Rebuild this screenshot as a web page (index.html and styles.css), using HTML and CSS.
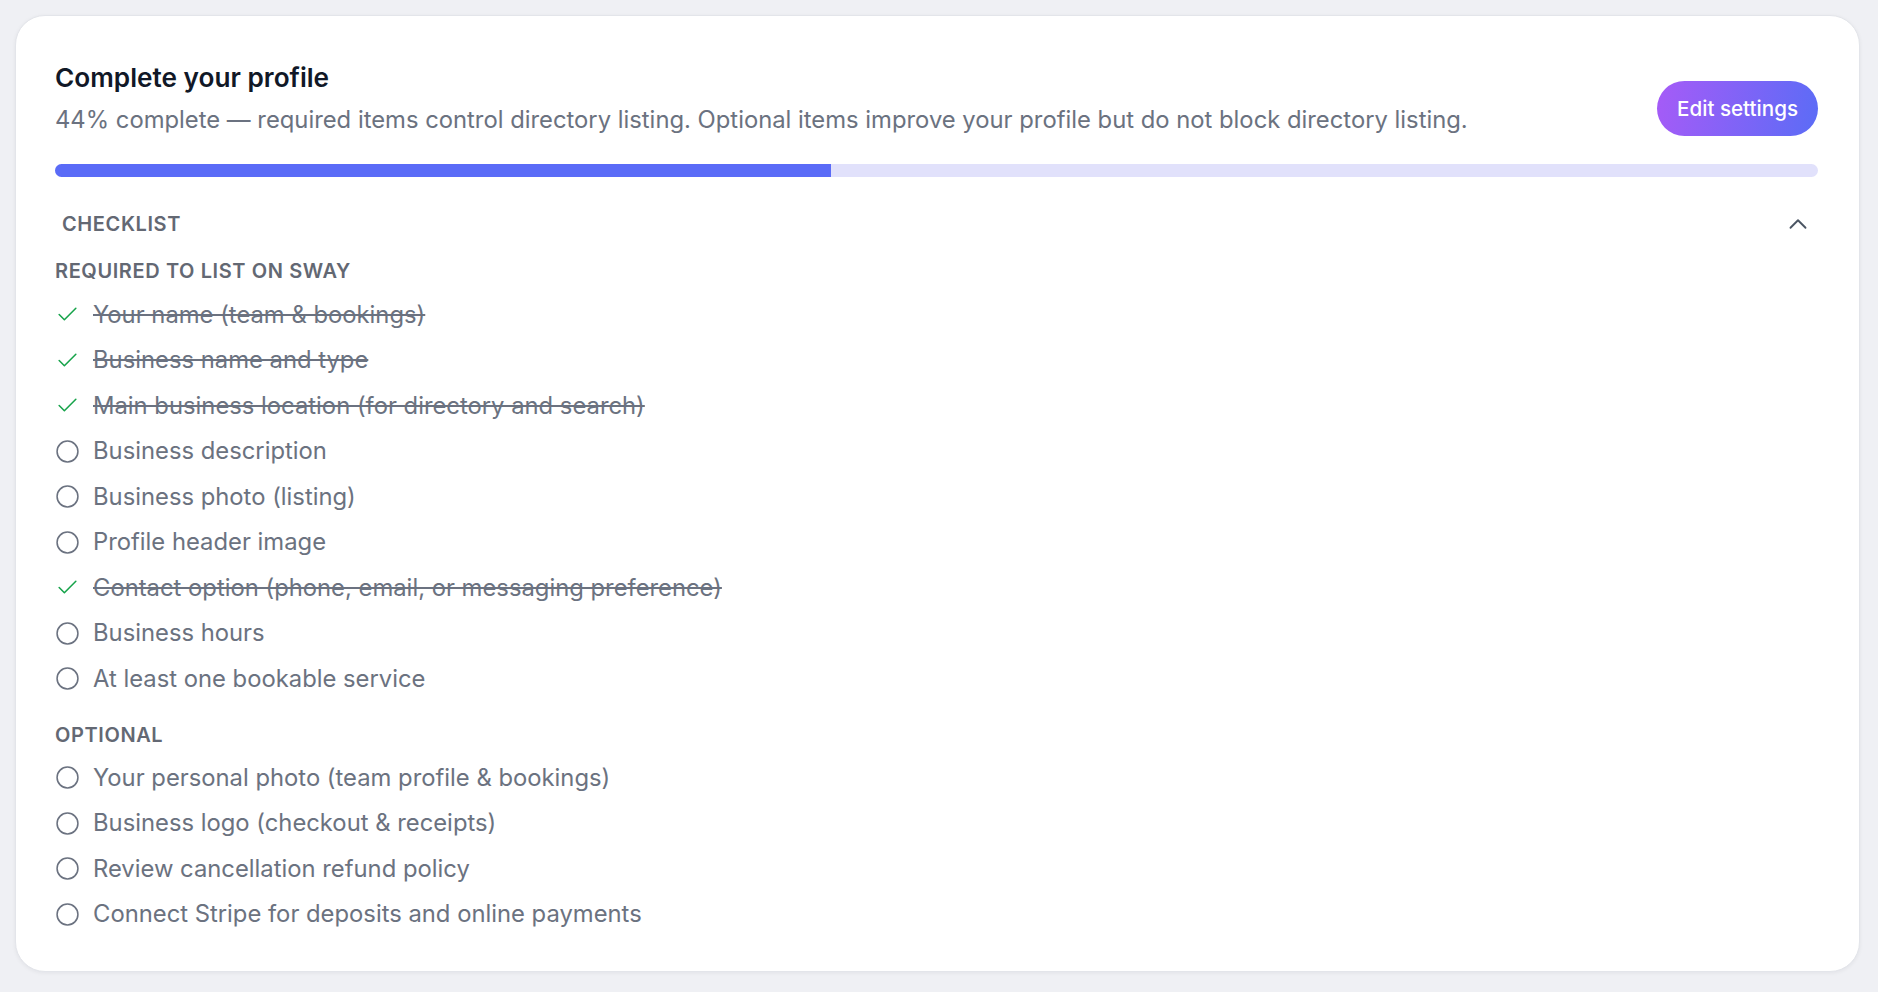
FILE: index.html
```html
<!DOCTYPE html>
<html lang="en">
<head>
    <meta charset="UTF-8">
    <meta name="viewport" content="width=device-width, initial-scale=1.0">
    <title>Complete your profile</title>
    <link rel="stylesheet" href="styles.css">
</head>
<body>
    <div class="page">
        <div class="card">
            <div class="header">
                <div class="intro">
                    <h1 class="title">Complete your profile</h1>
                    <p class="subtitle">44% complete — required items control directory listing. Optional items improve your profile but do not block directory listing.</p>
                </div>
                <button class="btn">Edit settings</button>
            </div>

            <div class="progress">
                <div class="progress-fill" style="width: 44%"></div>
            </div>

            <button class="checklist-head">
                <span>Checklist</span>
                <svg class="chevron" viewBox="0 0 24 24" fill="none" stroke="currentColor" stroke-width="1.5" stroke-linecap="round" stroke-linejoin="round"><path d="m18 15-6-6-6 6"/></svg>
            </button>

            <div class="group">
                <div class="group-label">Required to list on Sway</div>
                <ul class="items">
                    <li class="item done">
                        <svg class="icon check" viewBox="0 0 24 24" fill="none" stroke="currentColor" stroke-width="1.5" stroke-linecap="round" stroke-linejoin="round"><path d="M20 6 9 17l-5-5"/></svg>
                        <span>Your name (team &amp; bookings)</span>
                    </li>
                    <li class="item done">
                        <svg class="icon check" viewBox="0 0 24 24" fill="none" stroke="currentColor" stroke-width="1.5" stroke-linecap="round" stroke-linejoin="round"><path d="M20 6 9 17l-5-5"/></svg>
                        <span>Business name and type</span>
                    </li>
                    <li class="item done">
                        <svg class="icon check" viewBox="0 0 24 24" fill="none" stroke="currentColor" stroke-width="1.5" stroke-linecap="round" stroke-linejoin="round"><path d="M20 6 9 17l-5-5"/></svg>
                        <span>Main business location (for directory and search)</span>
                    </li>
                    <li class="item">
                        <svg class="icon" viewBox="0 0 24 24" fill="none" stroke="currentColor" stroke-width="1.5"><circle cx="12" cy="12" r="10"/></svg>
                        <span>Business description</span>
                    </li>
                    <li class="item">
                        <svg class="icon" viewBox="0 0 24 24" fill="none" stroke="currentColor" stroke-width="1.5"><circle cx="12" cy="12" r="10"/></svg>
                        <span>Business photo (listing)</span>
                    </li>
                    <li class="item">
                        <svg class="icon" viewBox="0 0 24 24" fill="none" stroke="currentColor" stroke-width="1.5"><circle cx="12" cy="12" r="10"/></svg>
                        <span>Profile header image</span>
                    </li>
                    <li class="item done">
                        <svg class="icon check" viewBox="0 0 24 24" fill="none" stroke="currentColor" stroke-width="1.5" stroke-linecap="round" stroke-linejoin="round"><path d="M20 6 9 17l-5-5"/></svg>
                        <span>Contact option (phone, email, or messaging preference)</span>
                    </li>
                    <li class="item">
                        <svg class="icon" viewBox="0 0 24 24" fill="none" stroke="currentColor" stroke-width="1.5"><circle cx="12" cy="12" r="10"/></svg>
                        <span>Business hours</span>
                    </li>
                    <li class="item">
                        <svg class="icon" viewBox="0 0 24 24" fill="none" stroke="currentColor" stroke-width="1.5"><circle cx="12" cy="12" r="10"/></svg>
                        <span>At least one bookable service</span>
                    </li>
                </ul>
            </div>

            <div class="group optional">
                <div class="group-label">Optional</div>
                <ul class="items">
                    <li class="item">
                        <svg class="icon" viewBox="0 0 24 24" fill="none" stroke="currentColor" stroke-width="1.5"><circle cx="12" cy="12" r="10"/></svg>
                        <span>Your personal photo (team profile &amp; bookings)</span>
                    </li>
                    <li class="item">
                        <svg class="icon" viewBox="0 0 24 24" fill="none" stroke="currentColor" stroke-width="1.5"><circle cx="12" cy="12" r="10"/></svg>
                        <span>Business logo (checkout &amp; receipts)</span>
                    </li>
                    <li class="item">
                        <svg class="icon" viewBox="0 0 24 24" fill="none" stroke="currentColor" stroke-width="1.5"><circle cx="12" cy="12" r="10"/></svg>
                        <span>Review cancellation refund policy</span>
                    </li>
                    <li class="item">
                        <svg class="icon" viewBox="0 0 24 24" fill="none" stroke="currentColor" stroke-width="1.5"><circle cx="12" cy="12" r="10"/></svg>
                        <span>Connect Stripe for deposits and online payments</span>
                    </li>
                </ul>
            </div>
        </div>
    </div>
</body>
</html>
```

FILE: styles.css
```css
body {
    margin: 0;
    background-color: #eff0f4;
    font-family: Inter, "Noto Sans", Arial, sans-serif;
    color: #6b7280;
}
.page {
    padding: 15px 18px 22px 15px;
}
.card {
    background: #fff;
    border: 1px solid #e3e5ea;
    border-radius: 30px;
    box-shadow: 0 1px 4px rgba(15, 23, 42, 0.06);
    padding: 46px 41px 34px 39px;
}
.header {
    display: flex;
    justify-content: space-between;
    align-items: flex-start;
    gap: 24px;
}
.title {
    margin: 0;
    font-size: 26.2px;
    font-weight: 600;
    line-height: 32px;
    color: #111827;
}
.subtitle {
    margin: 11px 0 0;
    font-size: 23.8px;
    line-height: 30px;
    color: #6b7280;
}
.btn {
    margin-top: 19px;
    height: 55px;
    padding: 0 20px;
    border: none;
    border-radius: 999px;
    background: linear-gradient(100deg, #a65bf7 0%, #5b6cf6 100%);
    color: #fff;
    font-family: inherit;
    font-size: 20.6px;
    font-weight: 500;
    white-space: nowrap;
    cursor: pointer;
}
.progress {
    margin-top: 28px;
    height: 13px;
    background: #e1e1fb;
    border-radius: 999px;
    overflow: hidden;
}
.progress-fill {
    height: 100%;
    background: #5a6bf7;
}
.checklist-head {
    display: flex;
    justify-content: space-between;
    align-items: center;
    width: 100%;
    height: 40px;
    margin-top: 27px;
    padding: 0 5px 0 7px;
    border: none;
    background: none;
    font-family: inherit;
    font-size: 20px;
    font-weight: 600;
    letter-spacing: 0.03em;
    text-transform: uppercase;
    color: #636873;
    cursor: pointer;
}
.chevron {
    width: 30px;
    height: 30px;
    color: #4b5563;
}
.group-label {
    margin: 15px 0 9px;
    font-size: 20px;
    font-weight: 600;
    line-height: 24px;
    letter-spacing: 0.03em;
    text-transform: uppercase;
    color: #636873;
}
.optional .group-label {
    margin: 21.5px 0 8px;
}
.items {
    list-style: none;
    margin: 0;
    padding: 0;
}
.item {
    display: flex;
    align-items: center;
    gap: 13px;
    padding: 8.75px 0;
    font-size: 23.8px;
    line-height: 28px;
}
.icon {
    flex: none;
    width: 25px;
    height: 25px;
    color: #6b7280;
}
.icon.check {
    color: #16a34a;
}
.done span {
    text-decoration: line-through;
}
```
